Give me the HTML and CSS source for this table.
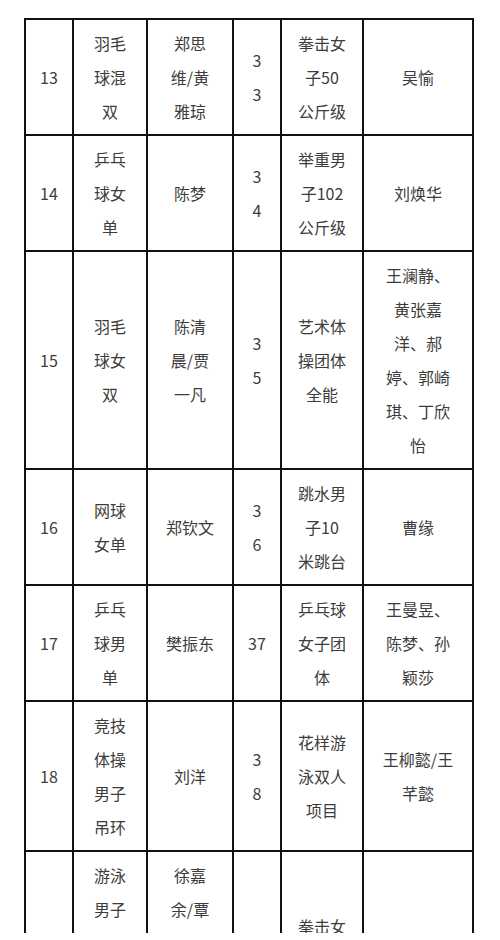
FILE: index.html
```html
<!DOCTYPE html>
<html lang="zh-CN">
<head>
<meta charset="utf-8">
<title>金牌榜</title>
<link rel="stylesheet" href="styles.css">
</head>
<body>
<div class="frame">
<table class="medals">
<colgroup>
<col class="c-no"><col class="c-event"><col class="c-name"><col class="c-no2"><col class="c-event2"><col class="c-name2">
</colgroup>
<tbody>
<tr><td>13</td><td>羽毛球混双</td><td>郑思维/黄雅琼</td><td>3<br>3</td><td>拳击女子50公斤级</td><td>吴愉</td></tr>
<tr><td>14</td><td>乒乓球女单</td><td>陈梦</td><td>3<br>4</td><td>举重男子102公斤级</td><td>刘焕华</td></tr>
<tr><td>15</td><td>羽毛球女双</td><td>陈清晨/贾一凡</td><td>3<br>5</td><td>艺术体操团体全能</td><td>王澜静、黄张嘉洋、郝婷、郭崎琪、丁欣怡</td></tr>
<tr><td>16</td><td>网球女单</td><td>郑钦文</td><td>3<br>6</td><td>跳水男子10米跳台</td><td>曹缘</td></tr>
<tr><td>17</td><td>乒乓球男单</td><td>樊振东</td><td>37</td><td>乒乓球女子团体</td><td>王曼昱、陈梦、孙颖莎</td></tr>
<tr><td>18</td><td>竞技体操男子吊环</td><td>刘洋</td><td>3<br>8</td><td>花样游泳双人项目</td><td>王柳懿/王芊懿</td></tr>
<tr><td>19</td><td>游泳男子4×100米混合泳接力</td><td>徐嘉余/覃海洋/孙佳俊/潘展乐</td><td>3<br>9</td><td>拳击女子54公斤级</td><td>常园</td></tr>
</tbody>
</table>
</div>
</body>
</html>
```
FILE: styles.css
```css
html, body {
  margin: 0;
  padding: 0;
  background: #ffffff;
}

.frame {
  height: 933px;
  overflow: hidden;
  padding: 18px 0 0 24px;
  box-sizing: border-box;
}

.medals {
  border-collapse: collapse;
  table-layout: fixed;
  width: 450px;
  font-family: "Noto Sans CJK SC", "Noto Sans", sans-serif;
  font-size: 16px;
  line-height: 34px;
  color: #3c3c3c;
}

.c-no { width: 48px; }
.c-event { width: 74px; }
.c-name { width: 86px; }
.c-no2 { width: 48px; }
.c-event2 { width: 82px; }
.c-name2 { width: 110px; }

.medals td {
  border: 2px solid #111111;
  padding: 6px 16px;
  text-align: center;
  vertical-align: middle;
}

.medals td:first-child,
.medals td:nth-child(4) {
  padding-left: 4px;
  padding-right: 4px;
}
```
